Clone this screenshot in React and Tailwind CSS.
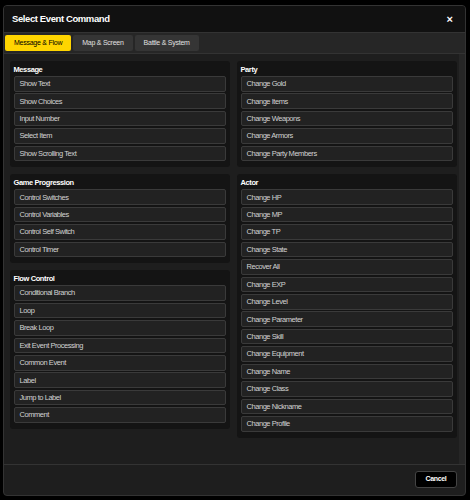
const sections = {
  left: [
    { title: "Message", items: ["Show Text", "Show Choices", "Input Number", "Select Item", "Show Scrolling Text"] },
    { title: "Game Progression", items: ["Control Switches", "Control Variables", "Control Self Switch", "Control Timer"] },
    {
      title: "Flow Control",
      items: ["Conditional Branch", "Loop", "Break Loop", "Exit Event Processing", "Common Event", "Label", "Jump to Label", "Comment"],
    },
  ],
  right: [
    { title: "Party", items: ["Change Gold", "Change Items", "Change Weapons", "Change Armors", "Change Party Members"] },
    {
      title: "Actor",
      items: [
        "Change HP",
        "Change MP",
        "Change TP",
        "Change State",
        "Recover All",
        "Change EXP",
        "Change Level",
        "Change Parameter",
        "Change Skill",
        "Change Equipment",
        "Change Name",
        "Change Class",
        "Change Nickname",
        "Change Profile",
      ],
    },
  ],
};

const tabs = ["Message & Flow", "Map & Screen", "Battle & System"];

function Section({ title, items }) {
  return (
    <div className="rounded-[3px] bg-[#141414] px-[4px] pt-[4px] pb-[6px]">
      <div className="mb-[2px] h-[9px] text-[7.5px] font-bold leading-[9px] tracking-[-0.4px] text-white">{title}</div>
      <div className="flex flex-col gap-[1.85px]">
        {items.map((item) => (
          <button
            key={item}
            className="flex h-[15.6px] items-center rounded-[2px] border border-[#3a3a3a] bg-[#222222] pl-[5px] text-left text-[7.5px] tracking-[-0.45px] text-[#d2d2d2]"
          >
            {item}
          </button>
        ))}
      </div>
    </div>
  );
}

export default function App() {
  return (
    <div className="h-[500px] w-[470px] bg-black pt-[5px] pl-[3px] font-['Liberation_Sans',Arial,sans-serif]">
      <div className="flex h-[491px] w-[463px] flex-col overflow-hidden rounded-[4px] border border-[#333333] bg-[#1e1e1e]">
        <div className="flex h-[27px] shrink-0 items-center justify-between border-b border-[#333333] bg-[#111111] pr-[12px] pl-[8px]">
          <span className="text-[9.5px] font-bold tracking-[-0.4px] text-white">Select Event Command</span>
          <span className="text-[11px] font-bold leading-none text-white">×</span>
        </div>

        <div className="flex h-[21px] shrink-0 items-start gap-[2px] border-b border-[#333333] bg-[#262626] pt-[2px] pl-[1px]">
          {tabs.map((tab, i) => (
            <button
              key={tab}
              className={
                i === 0
                  ? "h-[16px] rounded-[2px] bg-[#ffd500] px-[9px] text-[7px] tracking-[-0.25px] text-black"
                  : "h-[16px] rounded-[2px] bg-[#353535] px-[9px] text-[7px] tracking-[-0.25px] text-[#e0e0e0]"
              }
            >
              {tab}
            </button>
          ))}
        </div>

        <div className="flex min-h-0 flex-1">
          <div className="grid flex-1 grid-cols-2 items-start gap-[6.5px] pt-[7px] pr-[2px] pl-[5.5px]">
            <div className="flex flex-col gap-[7px]">
              {sections.left.map((s) => (
                <Section key={s.title} {...s} />
              ))}
            </div>
            <div className="flex flex-col gap-[7px]">
              {sections.right.map((s) => (
                <Section key={s.title} {...s} />
              ))}
            </div>
          </div>
          <div className="w-[6px] shrink-0 bg-[#262626]" />
        </div>

        <div className="flex h-[31px] shrink-0 items-start justify-end border-t border-[#333333] pt-[6px] pr-[8px]">
          <button className="h-[17px] w-[42px] rounded-[3px] border border-[#444444] bg-black text-[7px] font-bold tracking-[-0.35px] text-white">
            Cancel
          </button>
        </div>
      </div>
    </div>
  );
}
